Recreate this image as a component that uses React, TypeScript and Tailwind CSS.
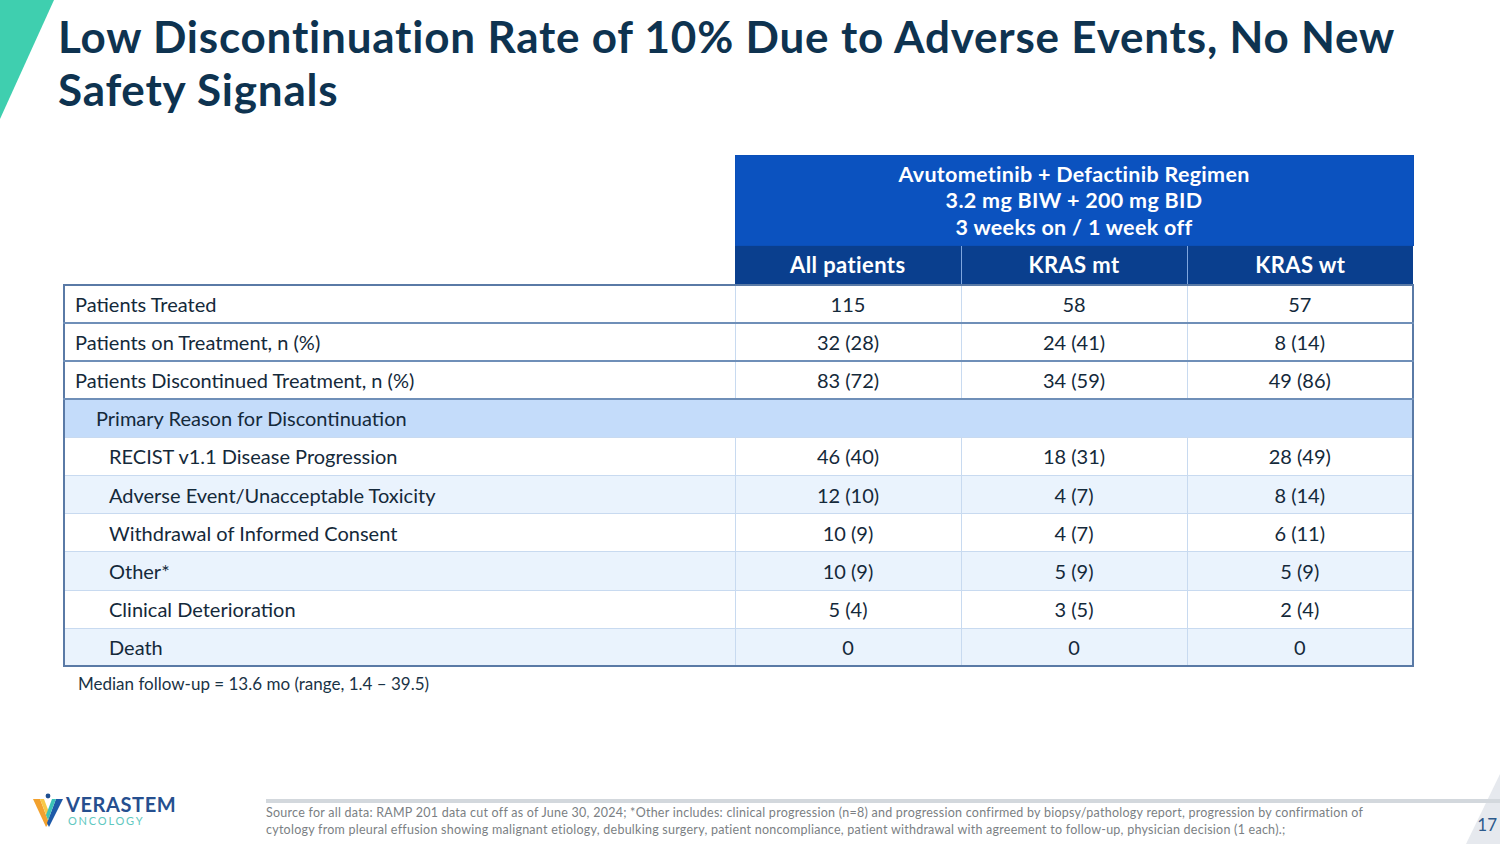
import React from "react";

const rows: { label: string; vals: string[]; indent: number; bg: string; section?: boolean }[] = [
  { label: "Patients Treated", vals: ["115", "58", "57"], indent: 0, bg: "bg-white" },
  { label: "Patients on Treatment, n (%)", vals: ["32 (28)", "24 (41)", "8 (14)"], indent: 0, bg: "bg-white" },
  { label: "Patients Discontinued Treatment, n (%)", vals: ["83 (72)", "34 (59)", "49 (86)"], indent: 0, bg: "bg-white" },
  { label: "Primary Reason for Discontinuation", vals: ["", "", ""], indent: 1, bg: "bg-[#c4dcfa]", section: true },
  { label: "RECIST v1.1 Disease Progression", vals: ["46 (40)", "18 (31)", "28 (49)"], indent: 2, bg: "bg-white" },
  { label: "Adverse Event/Unacceptable Toxicity", vals: ["12 (10)", "4 (7)", "8 (14)"], indent: 2, bg: "bg-[#eaf3fd]" },
  { label: "Withdrawal of Informed Consent", vals: ["10 (9)", "4 (7)", "6 (11)"], indent: 2, bg: "bg-white" },
  { label: "Other*", vals: ["10 (9)", "5 (9)", "5 (9)"], indent: 2, bg: "bg-[#eaf3fd]" },
  { label: "Clinical Deterioration", vals: ["5 (4)", "3 (5)", "2 (4)"], indent: 2, bg: "bg-white" },
  { label: "Death", vals: ["0", "0", "0"], indent: 2, bg: "bg-[#eaf3fd]" },
];

function Logo() {
  return (
    <div className="flex items-center gap-[2px]">
      <svg width="32" height="34" viewBox="0 0 30 34">
        <polygon points="0,6 7,6 16,30 13,34" fill="#f2a12e" />
        <polygon points="7,6 11,6 17,22 15,27" fill="#f7c948" />
        <polygon points="30,6 23,6 14,30 16,34" fill="#1e5aa8" />
        <polygon points="23,6 19,6 13,22 15,27" fill="#3cc3b7" />
        <circle cx="15" cy="3" r="2.4" fill="#1e4f91" />
      </svg>
      <div className="flex flex-col leading-none">
        <span className="text-[20px] font-bold tracking-[0.6px] text-[#264f8f]">VERASTEM</span>
        <span className="mt-[1px] pl-[2px] text-[11px] tracking-[1.8px] text-[#5fc8c0]">ONCOLOGY</span>
      </div>
    </div>
  );
}

export default function App() {
  return (
    <div className="relative h-[844px] w-[1500px] overflow-hidden bg-white font-['Lato',sans-serif] text-[#14293a]">
      {/* teal accent */}
      <svg className="absolute left-0 top-0" width="56" height="120" viewBox="0 0 56 120">
        <polygon points="0,0 54,0 0,119" fill="#3fcfaf" />
      </svg>
      {/* grey accent bottom right */}
      <svg className="absolute bottom-0 right-0" width="40" height="70" viewBox="0 0 40 70">
        <polygon points="40,0 40,70 6,70" fill="#e6e9ee" />
      </svg>

      <div className="relative flex flex-col">
        <h1 className="pl-[58px] pt-[10px] text-[44px] font-bold leading-[53px] tracking-[0.8px] text-[#0e3350]">
          Low Discontinuation Rate of 10% Due to Adverse Events, No New
          <br />
          Safety Signals
        </h1>

        <div className="mt-[39px] pl-[63px]">
          <table className="border-collapse text-[20px]">
            <thead>
              <tr>
                <th className="w-[671px] p-0" />
                <th colSpan={3} className="h-[90px] border border-[#0a4fb8] bg-[#0b52bf] p-0 text-center text-[21.5px] font-bold leading-[26.5px] tracking-[0.3px] text-white">
                  Avutometinib + Defactinib Regimen
                  <br />
                  3.2 mg BIW + 200 mg BID
                  <br />3 weeks on / 1 week off
                </th>
              </tr>
              <tr>
                <th className="p-0" />
                {["All patients", "KRAS mt", "KRAS wt"].map((h, i) => (
                  <th
                    key={h}
                    className={`h-[39px] w-[226px] border-t border-[#7fa6de] bg-[#0a3f8e] p-0 text-center text-[22px] font-bold tracking-[0.4px] text-white ${i > 0 ? "border-l" : ""}`}
                  >
                    {h}
                  </th>
                ))}
              </tr>
            </thead>
            <tbody className="border-2 border-[#5a7aa6]">
              {rows.map((r, idx) => {
                const darkLine = idx <= 2;
                return (
                  <tr key={r.label} className={`${r.bg} ${darkLine ? "border-b-2 border-[#6f8fb8]" : "border-b border-[#c8daf0]"}`}>
                    <td
                      className={`h-[38.2px] p-0 ${r.indent === 0 ? "pl-[10px]" : r.indent === 1 ? "pl-[31px]" : "pl-[44px]"}`}
                    >
                      {r.label}
                    </td>
                    {r.vals.map((v, i) => (
                      <td key={i} className={`h-[38.2px] p-0 text-center ${r.section ? "" : "border-l border-[#c8daf0]"}`}>
                        {v}
                      </td>
                    ))}
                  </tr>
                );
              })}
            </tbody>
          </table>
          <div className="mt-[4px] pl-[15px] text-[17px] text-[#1a3346]">Median follow-up = 13.6 mo (range, 1.4 – 39.5)</div>
        </div>

        <div className="mt-[102px] flex items-start">
          <div className="-mt-[6px] w-[266px] pl-[32px]">
            <Logo />
          </div>
          <div className="flex-1">
            <div className="h-[4px] bg-[#d3d8dd]" />
            <div className="flex items-start">
              <p className="mt-[1px] text-[12.5px] leading-[17px] tracking-[0.25px] text-[#7b7f84]">
                Source for all data: RAMP 201 data cut off as of June 30, 2024; *Other includes: clinical progression (n=8) and progression confirmed by biopsy/pathology report, progression by confirmation of
                <br />
                cytology from pleural effusion showing malignant etiology, debulking surgery, patient noncompliance, patient withdrawal with agreement to follow-up, physician decision (1 each).;
              </p>
              <span className="ml-auto mr-[3px] mt-[9px] text-[17px] text-[#2c5a8c]">17</span>
            </div>
          </div>
        </div>
      </div>
    </div>
  );
}
